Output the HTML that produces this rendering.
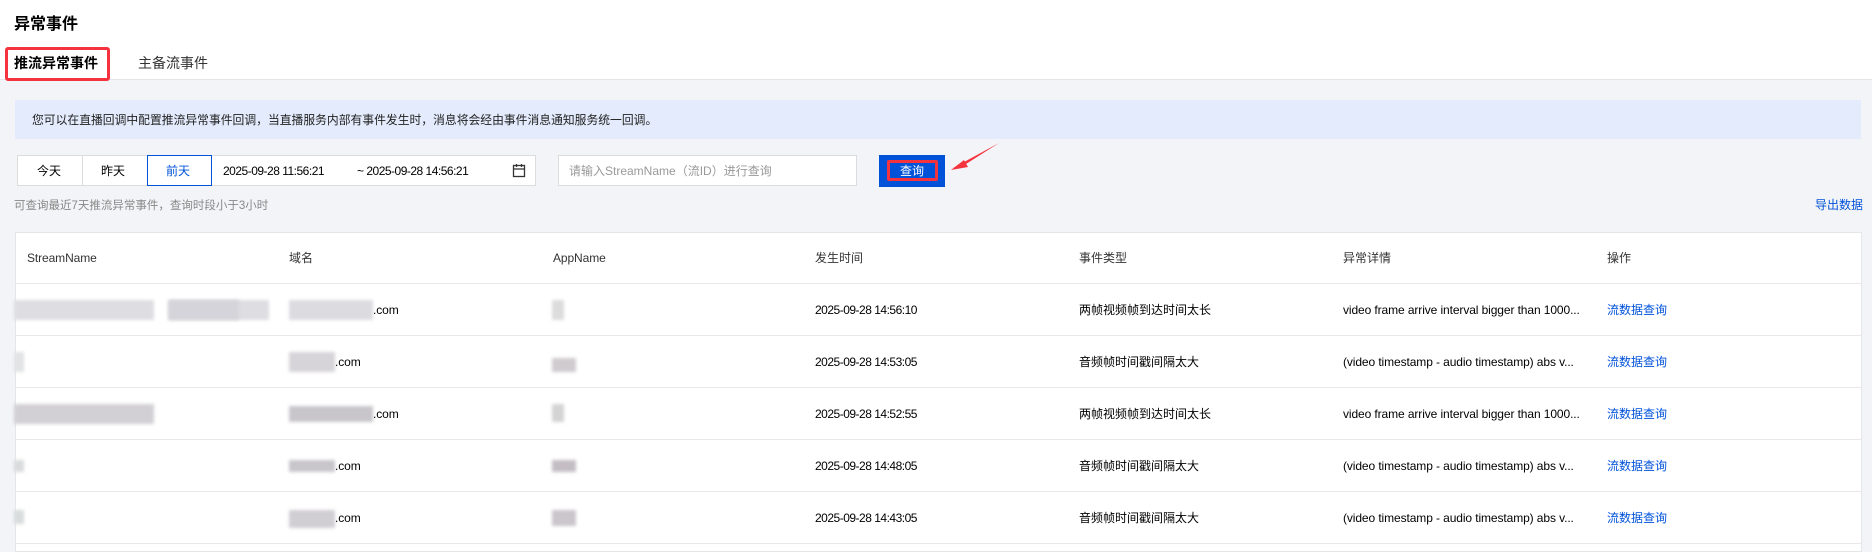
<!DOCTYPE html>
<html><head><meta charset="utf-8"><style>
*{margin:0;padding:0;box-sizing:border-box}
body{width:1872px;height:548px;overflow:hidden;background:#f3f4f7;font-family:"Liberation Sans","Noto Sans CJK SC",sans-serif;color:#000;font-size:12px;position:relative}
.a{position:absolute}
.hdr{left:0;top:0;width:1872px;height:80px;background:#fff;border-bottom:1px solid #e5e6ea}
.blur{position:absolute;background:#d4d4da;filter:blur(1.5px)}
.t{position:absolute;white-space:nowrap;line-height:16px}
.l{letter-spacing:-0.5px}
.m{letter-spacing:-0.1px}
.blue{color:#0052d9}
</style></head><body>
<div class="a hdr"></div>
<div class="t" style="left:14px;top:15px;font-size:16px;font-weight:bold;line-height:20px">异常事件</div>
<div class="t" style="left:14px;top:55px;font-size:14px;font-weight:bold">推流异常事件</div>
<div class="a" style="left:5px;top:47px;width:105px;height:34px;border:3px solid #f5333f;border-radius:3px"></div>
<div class="t" style="left:138px;top:55px;font-size:14px;color:#333">主备流事件</div>

<div class="a" style="left:15px;top:100px;width:1846px;height:39px;background:#e3ebfc"></div>
<div class="t" style="left:32px;top:112px;font-size:11.8px;color:#222">您可以在直播回调中配置推流异常事件回调，当直播服务内部有事件发生时，消息将会经由事件消息通知服务统一回调。</div>

<div class="a" style="left:17px;top:155px;width:519px;height:31px;background:#fff;border:1px solid #dcdcdc"></div>
<div class="a" style="left:82px;top:155px;width:1px;height:31px;background:#dcdcdc"></div>
<div class="a" style="left:147px;top:155px;width:65px;height:31px;border:1px solid #0052d9;background:#fff"></div>
<div class="t" style="left:37px;top:163px">今天</div>
<div class="t" style="left:101px;top:163px">昨天</div>
<div class="t blue" style="left:166px;top:163px">前天</div>
<div class="t l" style="left:223px;top:163px">2025-09-28 11:56:21</div>
<div class="t l" style="left:357px;top:163px">~ 2025-09-28 14:56:21</div>
<svg class="a" style="left:512px;top:163px" width="14" height="15" viewBox="0 0 14 15"><rect x="1.5" y="2.5" width="11" height="11" fill="none" stroke="#333" stroke-width="1.3"/><path d="M1.5 6h11M4.5 1v3M9.5 1v3" stroke="#333" stroke-width="1.3"/></svg>
<div class="a" style="left:558px;top:155px;width:299px;height:31px;background:#fff;border:1px solid #dcdcdc"></div>
<div class="t" style="left:569px;top:163px;color:#999">请输入StreamName（流ID）进行查询</div>
<div class="a" style="left:879px;top:155px;width:66px;height:32px;background:#0052d9"></div>
<div class="a" style="left:887px;top:160px;width:51px;height:21px;border:3px solid #f5333f;border-radius:2px"></div>
<div class="t" style="left:900px;top:163px;color:#fff">查询</div>
<svg class="a" style="left:950px;top:140px" width="54" height="32"><path d="M3 28 L49 3 L16 24 Z" fill="#f5333f"/><path d="M1 30 L14 20 L18 27 Z" fill="#f5333f"/></svg>

<div class="t" style="left:14px;top:198px;font-size:11.5px;color:#888">可查询最近7天推流异常事件，查询时段小于3小时</div>
<div class="t blue" style="left:1815px;top:197px;font-size:12px">导出数据</div>

<div class="a" style="left:15px;top:232px;width:1847px;height:320px;background:#fff;border:1px solid #e5e6ea"></div>
<div class="a" style="left:15px;top:283px;width:1847px;height:1px;background:#e8e8ea"></div>
<div class="a" style="left:15px;top:335px;width:1847px;height:1px;background:#e8e8ea"></div>
<div class="a" style="left:15px;top:387px;width:1847px;height:1px;background:#e8e8ea"></div>
<div class="a" style="left:15px;top:439px;width:1847px;height:1px;background:#e8e8ea"></div>
<div class="a" style="left:15px;top:491px;width:1847px;height:1px;background:#e8e8ea"></div>
<div class="a" style="left:15px;top:543px;width:1847px;height:1px;background:#e8e8ea"></div>

<div class="t m" style="left:27px;top:250px;color:#333">StreamName</div>
<div class="t" style="left:289px;top:250px;color:#333">域名</div>
<div class="t m" style="left:553px;top:250px;color:#333">AppName</div>
<div class="t" style="left:815px;top:250px;color:#333">发生时间</div>
<div class="t" style="left:1079px;top:250px;color:#333">事件类型</div>
<div class="t" style="left:1343px;top:250px;color:#333">异常详情</div>
<div class="t" style="left:1607px;top:250px;color:#333">操作</div>

<!-- row1 -->
<div class="blur" style="left:14px;top:300px;width:140px;height:20px;background:#dedee2"></div>
<div class="blur" style="left:168px;top:300px;width:101px;height:20px;background:#dedee2"></div>
<div class="blur" style="left:169px;top:300px;width:70px;height:20px"></div>
<div class="blur" style="left:289px;top:300px;width:84px;height:20px;background:#dcdce0"></div>
<div class="t m" style="left:373px;top:302px">.com</div>
<div class="blur" style="left:552px;top:300px;width:12px;height:20px;background:#dcdcdc"></div>
<div class="t l" style="left:815px;top:302px">2025-09-28 14:56:10</div>
<div class="t" style="left:1079px;top:302px">两帧视频帧到达时间太长</div>
<div class="t m" style="left:1343px;top:302px">video frame arrive interval bigger than 1000...</div>
<div class="t blue" style="left:1607px;top:302px">流数据查询</div>
<!-- row2 -->
<div class="blur" style="left:14px;top:352px;width:10px;height:20px;background:#e0e4e4"></div>
<div class="blur" style="left:289px;top:352px;width:46px;height:20px;background:#d6d4d8"></div>
<div class="t m" style="left:335px;top:354px">.com</div>
<div class="blur" style="left:552px;top:358px;width:24px;height:14px;background:#cfcbcf"></div>
<div class="t l" style="left:815px;top:354px">2025-09-28 14:53:05</div>
<div class="t" style="left:1079px;top:354px">音频帧时间戳间隔太大</div>
<div class="t m" style="left:1343px;top:354px">(video timestamp - audio timestamp) abs v...</div>
<div class="t blue" style="left:1607px;top:354px">流数据查询</div>
<!-- row3 -->
<div class="blur" style="left:14px;top:404px;width:140px;height:20px;background:#d2d0d4"></div>
<div class="blur" style="left:289px;top:406px;width:84px;height:16px;background:#c8c6ca"></div>
<div class="t m" style="left:373px;top:406px">.com</div>
<div class="blur" style="left:552px;top:404px;width:12px;height:18px;background:#d4d4d4"></div>
<div class="t l" style="left:815px;top:406px">2025-09-28 14:52:55</div>
<div class="t" style="left:1079px;top:406px">两帧视频帧到达时间太长</div>
<div class="t m" style="left:1343px;top:406px">video frame arrive interval bigger than 1000...</div>
<div class="t blue" style="left:1607px;top:406px">流数据查询</div>
<!-- row4 -->
<div class="blur" style="left:14px;top:460px;width:10px;height:12px;background:#d8dcdc"></div>
<div class="blur" style="left:289px;top:460px;width:46px;height:12px;background:#c8c6ca"></div>
<div class="t m" style="left:335px;top:458px">.com</div>
<div class="blur" style="left:552px;top:460px;width:24px;height:12px;background:#c4bec4"></div>
<div class="t l" style="left:815px;top:458px">2025-09-28 14:48:05</div>
<div class="t" style="left:1079px;top:458px">音频帧时间戳间隔太大</div>
<div class="t m" style="left:1343px;top:458px">(video timestamp - audio timestamp) abs v...</div>
<div class="t blue" style="left:1607px;top:458px">流数据查询</div>
<!-- row5 -->
<div class="blur" style="left:14px;top:510px;width:10px;height:14px;background:#d8dcdc"></div>
<div class="blur" style="left:289px;top:510px;width:46px;height:18px;background:#d0ced2"></div>
<div class="t m" style="left:335px;top:510px">.com</div>
<div class="blur" style="left:552px;top:510px;width:24px;height:16px;background:#cbc6cb"></div>
<div class="t l" style="left:815px;top:510px">2025-09-28 14:43:05</div>
<div class="t" style="left:1079px;top:510px">音频帧时间戳间隔太大</div>
<div class="t m" style="left:1343px;top:510px">(video timestamp - audio timestamp) abs v...</div>
<div class="t blue" style="left:1607px;top:510px">流数据查询</div>
</body></html>
